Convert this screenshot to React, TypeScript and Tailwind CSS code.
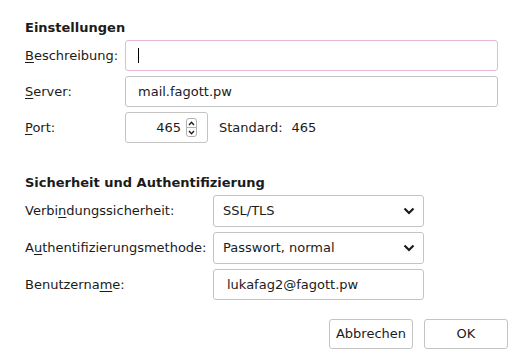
import type { ReactNode } from "react";

function Key({ children }: { children: ReactNode }) {
  return <span className="underline underline-offset-2">{children}</span>;
}

function Chevron() {
  return (
    <svg width="12" height="8" viewBox="0 0 12 8" className="shrink-0">
      <path d="M1.5 1.5 L6 6 L10.5 1.5" fill="none" stroke="#1b1b1b" strokeWidth="2.2" />
    </svg>
  );
}

function Caret({ up }: { up?: boolean }) {
  return (
    <svg width="7" height="5" viewBox="0 0 7 5">
      <path d={up ? "M1 4 L3.5 1.2 L6 4" : "M1 1 L3.5 3.8 L6 1"} fill="none" stroke="#1b1b1b" strokeWidth="1.3" />
    </svg>
  );
}

function Field({ children, focused }: { children?: ReactNode; focused?: boolean }) {
  return (
    <div
      className={
        "flex h-[31px] items-center rounded-[3px] border bg-white pl-[12px] " +
        (focused ? "border-[#e9b6d3]" : "border-[#c4c4c4]")
      }
    >
      {children}
    </div>
  );
}

function Select({ value }: { value: string }) {
  return (
    <div className="flex h-[32px] w-[211px] items-center justify-between rounded-[3px] border border-[#c4c4c4] bg-white pl-[9px] pr-[8px]">
      <span>{value}</span>
      <Chevron />
    </div>
  );
}

export default function App() {
  return (
    <div className="h-[362px] w-[523px] overflow-hidden bg-white pl-[25px] pr-[15px] pt-[20px] font-['DejaVu_Sans',sans-serif] text-[13px] leading-4 text-[#1b1b1b]">
      <h2 className="font-bold">Einstellungen</h2>

      <div className="mr-[10px] mt-[4px] grid grid-cols-[100px_1fr] items-center gap-y-[5px]">
        <label>
          <Key>B</Key>eschreibung:
        </label>
        <Field focused>
          <span className="h-[15px] w-px bg-black" />
        </Field>

        <label>
          <Key>S</Key>erver:
        </label>
        <Field>mail.fagott.pw</Field>

        <label>
          <Key>P</Key>ort:
        </label>
        <div className="flex items-center">
          <div className="flex h-[31px] w-[83px] items-center justify-end gap-[5px] rounded-[3px] border border-[#c4c4c4] bg-white pr-[10px]">
            <span>465</span>
            <div className="flex flex-col">
              <div className="flex h-[10px] w-[11px] items-center justify-center rounded-t-[3px] border border-[#b0b0b0]">
                <Caret up />
              </div>
              <div className="-mt-px flex h-[10px] w-[11px] items-center justify-center rounded-b-[3px] border border-[#b0b0b0]">
                <Caret />
              </div>
            </div>
          </div>
          <span className="ml-[11px]">Standard:</span>
          <span className="ml-[9px]">465</span>
        </div>
      </div>

      <h2 className="mt-[32px] font-bold">Sicherheit und Authentifizierung</h2>

      <div className="mt-[4px] grid grid-cols-[188px_211px] items-center gap-y-[5px]">
        <label>
          Verbi<Key>n</Key>dungssicherheit:
        </label>
        <Select value="SSL/TLS" />

        <label>
          A<Key>u</Key>thentifizierungsmethode:
        </label>
        <Select value="Passwort, normal" />

        <label>
          Benutzerna<Key>m</Key>e:
        </label>
        <div className="flex h-[31px] items-center rounded-[3px] border border-[#c4c4c4] bg-white pl-[13px]">
          lukafag2@fagott.pw
        </div>
      </div>

      <div className="mt-[19px] flex justify-end gap-[11px]">
        <button className="h-[30px] w-[84px] rounded-[3px] border border-[#c4c4c4] bg-white">Abbrechen</button>
        <button className="h-[30px] w-[84px] rounded-[3px] border border-[#c4c4c4] bg-white">OK</button>
      </div>
    </div>
  );
}
